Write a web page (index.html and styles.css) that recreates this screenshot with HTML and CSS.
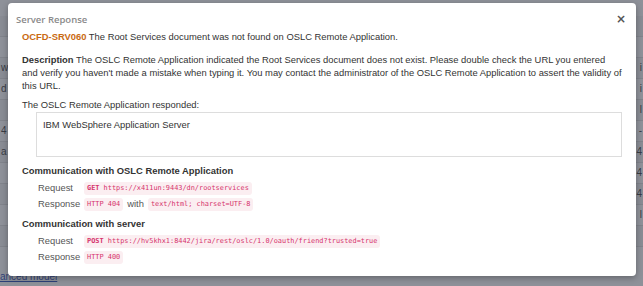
FILE: index.html
```html
<!DOCTYPE html>
<html>
<head>
<meta charset="utf-8">
<link rel="stylesheet" href="styles.css">
</head>
<body>
<div class="page">
  <div class="bg-table">
    <div class="bg-row"><span class="l">&nbsp;</span><span class="r">&nbsp;</span></div>
    <div class="bg-row"><span class="l">&nbsp;</span><span class="r">&nbsp;</span></div>
    <div class="bg-row"><span class="l">w</span><span class="r">i</span></div>
    <div class="bg-row"><span class="l">d</span><span class="r">i</span></div>
    <div class="bg-row"><span class="l">&nbsp;</span><span class="r">l</span></div>
    <div class="bg-row"><span class="l">4</span><span class="r">-</span></div>
    <div class="bg-row"><span class="l">a</span><span class="r">4</span></div>
    <div class="bg-row"><span class="l">&nbsp;</span><span class="r">4</span></div>
    <div class="bg-row"><span class="l">&nbsp;</span><span class="r">4</span></div>
    <div class="bg-row"><span class="l">&nbsp;</span><span class="r">l</span></div>
    <div class="bg-row"><span class="l">&nbsp;</span><span class="r">&nbsp;</span></div>
    <div class="bg-link">anced model</div>
  </div>
  <div class="overlay"></div>
  <div class="modal">
    <div class="modal-header">
      <span class="modal-title">Server Reponse</span>
      <span class="close">×</span>
    </div>
    <div class="modal-body">
      <p class="msg"><b class="err">OCFD-SRV060</b> The Root Services document was not found on OSLC Remote Application.</p>
      <p class="desc"><b>Description</b> The OSLC Remote Application indicated the Root Services document does not exist. Please double check the URL you entered and verify you haven't made a mistake when typing it. You may contact the administrator of the OSLC Remote Application to assert the validity of this URL.</p>
      <p class="resp-label">The OSLC Remote Application responded:</p>
      <div class="resp-box">IBM WebSphere Application Server</div>
      <h4 class="sec">Communication with OSLC Remote Application</h4>
      <div class="kv"><span class="k">Request</span><code><b>GET</b> https://x411un:9443/dn/rootservices</code></div>
      <div class="kv"><span class="k">Response</span><code>HTTP 404</code><span class="with">with</span><code>text/html; charset=UTF-8</code></div>
      <h4 class="sec sec2">Communication with server</h4>
      <div class="kv"><span class="k">Request</span><code><b>POST</b> https://hv5khx1:8442/jira/rest/oslc/1.0/oauth/friend?trusted=true</code></div>
      <div class="kv"><span class="k">Response</span><code>HTTP 400</code></div>
    </div>
  </div>
</div>
</body>
</html>
```
FILE: styles.css
```css
html, body {
  margin: 0;
  padding: 0;
}
body {
  width: 643px;
  height: 286px;
  overflow: hidden;
  font-family: "Liberation Sans", Arial, sans-serif;
  font-size: 9.4px;
  color: #333;
}
.page {
  position: relative;
  width: 643px;
  height: 286px;
  background: #fff;
  overflow: hidden;
}
.bg-table {
  padding-top: 16px;
  font-size: 10px;
  color: #333;
}
.bg-row {
  display: flex;
  justify-content: space-between;
  height: 20px;
  line-height: 20px;
  border-bottom: 1px solid #ddd;
}
.bg-row .l { margin-left: 1px; }
.bg-row .r { margin-right: 1px; }
.bg-row:nth-child(odd) { background: #f4f4f4; }
.bg-link {
  margin-top: 24px;
  color: #1a3fb0;
  text-decoration: underline;
  margin-left: 0;
  font-size: 10px;
}
.overlay {
  position: absolute;
  inset: 0;
  background: rgba(60, 66, 80, 0.58);
}
.modal {
  position: absolute;
  left: 8px;
  top: 3px;
  width: 628px;
  height: 273px;
  background: #fff;
  border-radius: 4px;
  box-shadow: 0 2px 6px rgba(0, 0, 0, 0.3);
  box-sizing: border-box;
}
.modal-header {
  display: flex;
  justify-content: space-between;
  align-items: center;
  padding: 8px 10px 0 8px;
  height: 16px;
}
.modal-title {
  font-family: "Open Sans", sans-serif;
  font-weight: 600;
  font-size: 9.5px;
  color: #8a8a8a;
}
.close {
  font-family: "DejaVu Sans", sans-serif;
  font-weight: bold;
  font-size: 12px;
  color: #555;
}
.modal-body {
  padding: 3px 14px 0 14px;
}
p {
  margin: 0;
  line-height: 13px;
}
.err {
  color: #c96a12;
}
.msg {
  margin-bottom: 10px;
}
.desc {
  margin-bottom: 6px;
}
.resp-label {
  margin-bottom: 1px;
}
.resp-box {
  margin-left: 14px;
  height: 45px;
  border: 1px solid #ddd;
  padding: 5px 6px;
  box-sizing: border-box;
  line-height: 13px;
}
.sec {
  margin: 7px 0 3px 0;
  font-size: 9.4px;
  font-weight: bold;
  line-height: 13px;
}
.sec2 {
  margin-top: 5px;
}
.kv {
  display: flex;
  align-items: center;
  height: 16px;
  line-height: 16px;
  padding-left: 16px;
  color: #555;
}
.k {
  width: 46px;
  flex: none;
  color: #555;
}
.with {
  margin: 0 4px;
}
code {
  font-family: "DejaVu Sans Mono", monospace;
  font-size: 6.9px;
  color: #d6336c;
  background: #fbeef1;
  padding: 2px 3px;
  border-radius: 3px;
  line-height: 9px;
}
code b {
  font-weight: bold;
}
```
